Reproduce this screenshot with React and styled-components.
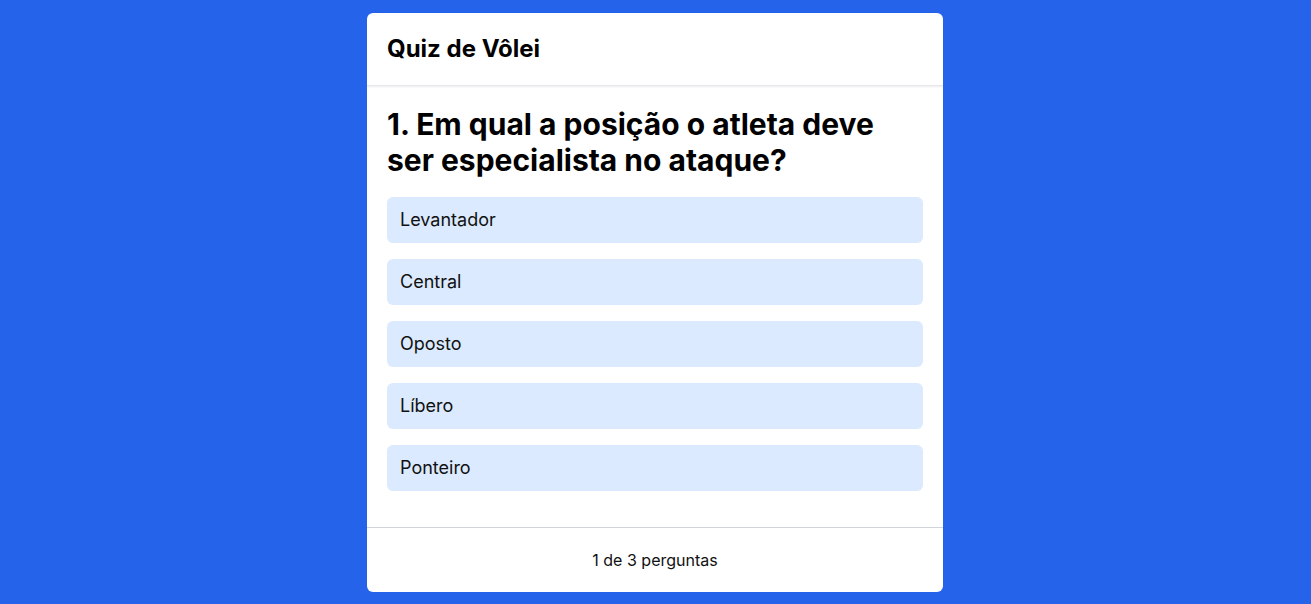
import React from "react";
import styled, { createGlobalStyle } from "styled-components";

const Global = createGlobalStyle`
  html, body { margin: 0; padding: 0; background: #2563eb; }
  body { font-family: Inter, "Noto Sans", sans-serif; color: #111; }
`;

const Page = styled.div`
  display: flex;
  justify-content: center;
  padding: 13px 1px 0 0;
  min-height: 604px;
  box-sizing: border-box;
`;

const Card = styled.div`
  width: 576px;
  background: #fff;
  border-radius: 6px;
  display: flex;
  flex-direction: column;
  overflow: hidden;
  align-self: flex-start;
`;

const Header = styled.header`
  padding: 20px;
  border-bottom: 1px solid #e5e7eb;
  box-shadow: 0 1px 2px rgba(0, 0, 0, 0.08);
  position: relative;
`;

const Title = styled.h1`
  margin: 0;
  font-size: 24px;
  line-height: 32px;
  font-weight: 700;
  color: #000;
`;

const Body = styled.main`
  padding: 20px 20px 36px;
`;

const Question = styled.h2`
  margin: 0 0 19px;
  font-size: 30px;
  line-height: 36px;
  font-weight: 700;
  color: #000;
`;

const Options = styled.div`
  display: flex;
  flex-direction: column;
  gap: 16px;
`;

const Option = styled.button`
  display: block;
  width: 100%;
  text-align: left;
  background: #dbeafe;
  border: 1px solid transparent;
  border-radius: 6px;
  padding: 8px 12px;
  font-family: inherit;
  font-size: 18px;
  line-height: 28px;
  color: #111;
  cursor: pointer;
`;

const Footer = styled.footer`
  border-top: 1px solid #d1d5db;
  padding: 20px;
  text-align: center;
  font-size: 16px;
  line-height: 24px;
  color: #111;
`;

const options = ["Levantador", "Central", "Oposto", "Líbero", "Ponteiro"];

export default function App() {
  return (
    <>
      <Global />
      <Page>
        <Card>
          <Header>
            <Title>Quiz de Vôlei</Title>
          </Header>
          <Body>
            <Question>1. Em qual a posição o atleta deve ser especialista no ataque?</Question>
            <Options>
              {options.map((o) => (
                <Option key={o}>{o}</Option>
              ))}
            </Options>
          </Body>
          <Footer>1 de 3 perguntas</Footer>
        </Card>
      </Page>
    </>
  );
}
